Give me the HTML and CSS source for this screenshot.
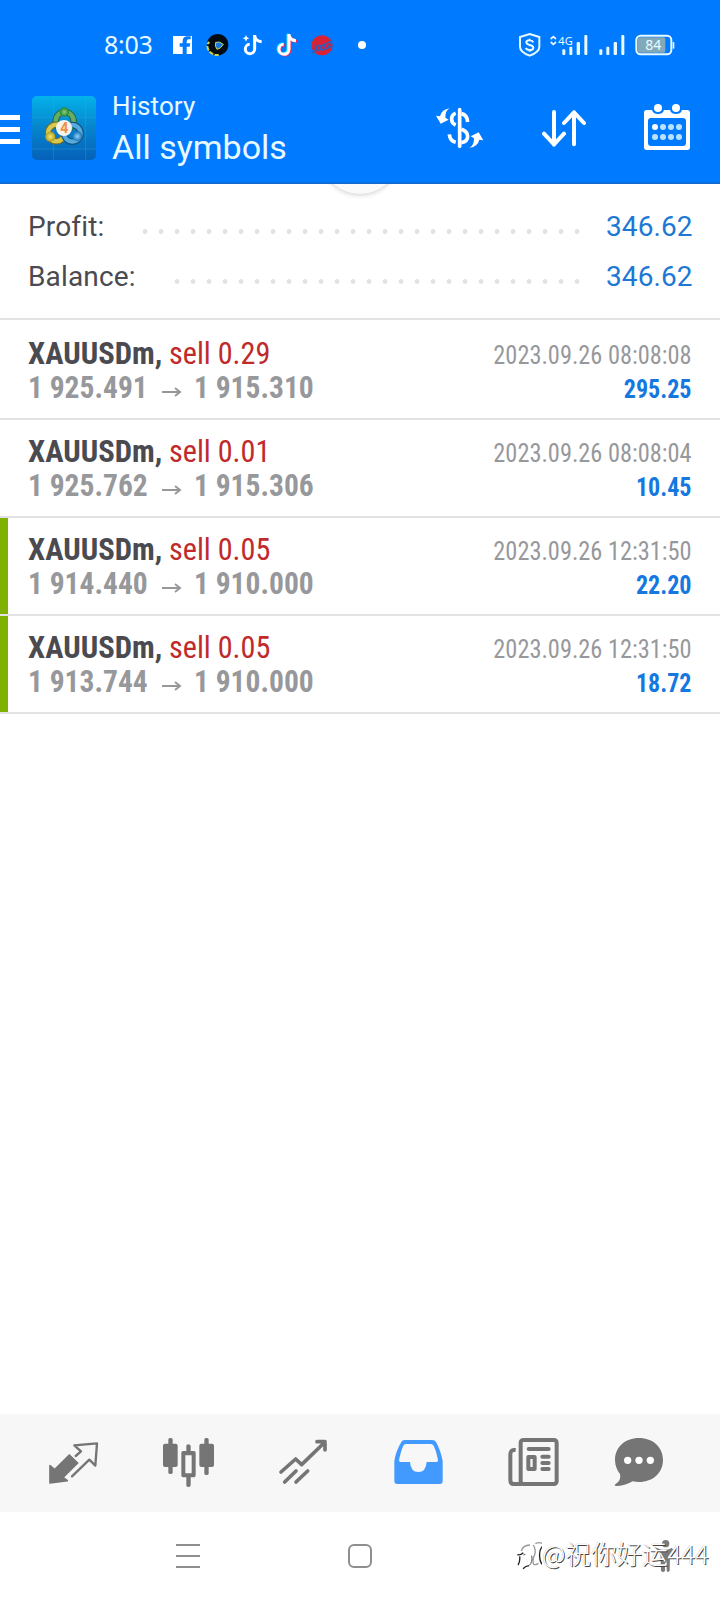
FILE: index.html
```html
<!DOCTYPE html>
<html lang="en">
<head>
<meta charset="utf-8">
<title>History</title>
<link rel="stylesheet" href="styles.css">
</head>
<body>
<div class="screen">
  <div class="status">
    <span class="clock">8:03</span>
    <svg class="apps" width="196" height="30" viewBox="510 30 588 90">
      <path fill="#fff" d="M519 48h57v54h-16V80h9l2-10h-11v-6q0-6 6-6h6v-9h-9q-15 0-15 15v6h-9v10h9v22h-29z"/>
      <circle cx="653" cy="74" r="32" fill="#030b12"/>
      <path d="M622 78q2 22 26 27h8M622 72l6-6" stroke="#d6cf48" stroke-width="6" stroke-dasharray="14 4" fill="none"/>
      <path d="M647 67q12-4 23 6-8 14-19 15-7-9-4-21z" fill="#1478e0" stroke="#c4d06c" stroke-width="3"/>
      <g fill="none" stroke-width="9">
        <path stroke="#fff" d="M764 45v42a14 14 0 1 1-15-14M764 47q3 17 21 18"/>
        <path stroke="#25e8f0" d="M864 41v45a15 15 0 1 1-16-15M864 42q3 17 21 18"/>
        <path stroke="#f32b56" d="M870 45v45a15 15 0 1 1-16-15M870 46q3 17 21 18"/>
        <path stroke="#fff" d="M867 42v46a15 15 0 1 1-16-15M867 44q3 17 21 18"/>
      </g>
      <path fill="#fff" d="M738 45l3 7 7 3-7 3-3 7-3-7-7-3 7-3z"/>
      <ellipse cx="966" cy="76" rx="32" ry="30" fill="#d82335"/>
      <path d="M934 98q16 2 12-26M958 76q-9 0-9 9t8 6q5-4 4-16l2 16M965 77l12-5-9 18 13-5M980 69l14-5-11 20 18-8" stroke="#2b5cc4" stroke-width="4" fill="none"/>
      <circle cx="1086" cy="75" r="12" fill="#fff"/>
    </svg>
    <svg class="signals" width="160" height="30" viewBox="470 30 480 90">
      <g fill="none" stroke="#e8faff" stroke-width="6">
        <path d="M508 42l29 9v29q0 16-29 27q-29-11-29-27V51z"/>
        <path stroke-width="6" d="M519 67q-3-6-11-6-10 0-10 6 0 6 10 8t11 8q0 7-11 7-9 0-12-6M508 56v5M508 90v5"/>
        <path stroke-width="5" d="M571 57l8-7 8 7M571 66l8 7 8-7"/>
        <rect x="828" y="47" width="105" height="56" rx="13"/>
      </g>
      <rect x="833" y="52" width="82" height="46" rx="5" fill="#82a9ba"/>
      <g fill="#e8faff">
        <rect x="606" y="88" width="9" height="17" rx="3"/><rect x="627" y="80" width="9" height="25" rx="3"/><rect x="649" y="66" width="10" height="39" rx="3"/><rect x="672" y="45" width="9" height="60" rx="3"/>
        <rect x="717" y="88" width="9" height="17" rx="3"/><rect x="738" y="80" width="9" height="25" rx="3"/><rect x="760" y="66" width="10" height="39" rx="3"/><rect x="783" y="45" width="9" height="60" rx="3"/>
        <rect x="937" y="66" width="5" height="20" rx="2"/>
        <text class="tiny" x="594" y="75" textLength="43" lengthAdjust="spacingAndGlyphs">4G</text>
        <text class="tiny level" x="855" y="90" textLength="48" lengthAdjust="spacingAndGlyphs">84</text>
      </g>
    </svg>
  </div>

  <div class="header">
    <svg class="menu" width="20" height="30" viewBox="0 0 20 30"><path fill="#fff" d="M0 1h20v5H0zM0 13h20v5H0zM0 25h20v5H0z"/></svg>
    <svg class="logo" width="64" height="64" viewBox="96 228 192 192">
      <defs>
        <linearGradient id="sky" x2="0" y2="1"><stop stop-color="#04b2ea"/><stop offset=".5" stop-color="#0684cc"/><stop offset="1" stop-color="#0561b8"/></linearGradient>
        <radialGradient id="gr"><stop stop-color="#8bd473"/><stop offset="1" stop-color="#1f8138"/></radialGradient>
        <radialGradient id="ye"><stop stop-color="#f7e873"/><stop offset="1" stop-color="#b29c20"/></radialGradient>
        <radialGradient id="bl"><stop stop-color="#8cd3fa"/><stop offset="1" stop-color="#1870b8"/></radialGradient>
      </defs>
      <rect x="96" y="228" width="192" height="192" rx="15" fill="url(#sky)"/>
      <path d="M160 228v192M257 228v192M96 292h192M96 387h192" stroke="#38b4ea" stroke-opacity=".3" stroke-width="3"/>
      <g fill="none" stroke-width="19">
        <circle cx="194" cy="303" r="27" stroke="#27643d"/><circle cx="194" cy="303" r="27" stroke="#63ad64" stroke-width="13"/>
        <circle cx="169" cy="339" r="25" stroke="#726c27"/><circle cx="169" cy="339" r="25" stroke="#d8c94e" stroke-width="13"/>
        <circle cx="217" cy="340" r="25" stroke="#155078"/><circle cx="217" cy="340" r="25" stroke="#55acdc" stroke-width="13"/>
      </g>
      <circle cx="193" cy="276" r="14" fill="url(#gr)"/><circle cx="151" cy="350" r="15" fill="url(#ye)"/><circle cx="232" cy="349" r="15" fill="url(#bl)"/>
      <circle cx="192" cy="324" r="24" fill="#f6f3eb"/>
      <text class="four" x="181" y="339">4</text>
    </svg>
    <div class="titles">
      <span class="title">History</span>
      <span class="subtitle">All symbols</span>
    </div>
    <div class="actions">
      <svg width="50" height="44" viewBox="226 258 150 132">
        <path fill="none" stroke="#fff" stroke-width="11" stroke-linecap="round" d="M300 269v110"/>
        <path fill="none" stroke="#fff" stroke-width="11" d="M288 280q-12 4-12 18 0 12 12 17M305 281q17 3 19 25M288 367q-17-4-19-24M305 368q19-3 19-19 0-14-19-21"/>
        <path fill="#fff" d="M270 265Q256 273 257 293L267 299 243 311 229 287 241 289Q246 268 270 265zM330 383Q344 375 343 355L333 349 357 337 371 361 359 359Q354 380 330 383z"/>
      </svg>
      <svg class="sort" width="46" height="38" viewBox="543 266 138 114"><path d="M582 275v98M552 340l30 32 30-32M642 372v-96M612 308l30-32 30 32" fill="none" stroke="#fff" stroke-width="12" stroke-linecap="round" stroke-linejoin="round"/></svg>
      <svg width="48" height="48" viewBox="849 249 144 144">
        <path fill="#fff" fill-rule="evenodd" d="M860 270h16q3 12 18 12t18-12h18q3 12 18 12t18-12h16q8 0 8 8v104q0 8-8 8H860q-8 0-8-8V278q0-8 8-8zM873 294q-9 0-9 9v66q0 9 9 9h96q9 0 9-9v-66q0-9-9-9z"/>
        <circle cx="894" cy="264" r="12" fill="#fff"/><circle cx="948" cy="264" r="12" fill="#fff"/><circle cx="885" cy="321" r="9" fill="#fff"/>
        <g fill="#b9e2ff"><circle cx="909" cy="321" r="9"/><circle cx="933" cy="321" r="9"/><circle cx="957" cy="321" r="9"/><circle cx="885" cy="351" r="9"/><circle cx="909" cy="351" r="9"/><circle cx="933" cy="351" r="9"/><circle cx="957" cy="351" r="9"/></g>
      </svg>
    </div>
  </div>

  <div class="summary">
    <span class="spinner"></span>
    <div class="line"><span class="label">Profit:</span><span class="dots long"></span><span class="amount">346.62</span></div>
    <div class="line"><span class="label">Balance:</span><span class="dots short"></span><span class="amount">346.62</span></div>
  </div>

  <div class="deals">
    <div class="deal"><div class="left"><div class="name"><b>XAUUSDm,</b> <span class="sell">sell 0.29</span></div><div class="price"><span class="from">1 925.491</span><svg class="arrow" width="22" height="12" viewBox="0 0 22 12"><path d="M1 6h18M14 2l5 4-5 4"/></svg><span class="to">1 915.310</span></div></div><div class="right"><div class="date">2023.09.26 08:08:08</div><div class="gain">295.25</div></div></div>
    <div class="deal"><div class="left"><div class="name"><b>XAUUSDm,</b> <span class="sell">sell 0.01</span></div><div class="price"><span class="from">1 925.762</span><svg class="arrow" width="22" height="12" viewBox="0 0 22 12"><path d="M1 6h18M14 2l5 4-5 4"/></svg><span class="to">1 915.306</span></div></div><div class="right"><div class="date">2023.09.26 08:08:04</div><div class="gain">10.45</div></div></div>
    <div class="deal marked"><div class="left"><div class="name"><b>XAUUSDm,</b> <span class="sell">sell 0.05</span></div><div class="price"><span class="from">1 914.440</span><svg class="arrow" width="22" height="12" viewBox="0 0 22 12"><path d="M1 6h18M14 2l5 4-5 4"/></svg><span class="to">1 910.000</span></div></div><div class="right"><div class="date">2023.09.26 12:31:50</div><div class="gain">22.20</div></div></div>
    <div class="deal marked"><div class="left"><div class="name"><b>XAUUSDm,</b> <span class="sell">sell 0.05</span></div><div class="price"><span class="from">1 913.744</span><svg class="arrow" width="22" height="12" viewBox="0 0 22 12"><path d="M1 6h18M14 2l5 4-5 4"/></svg><span class="to">1 910.000</span></div></div><div class="right"><div class="date">2023.09.26 12:31:50</div><div class="gain">18.72</div></div></div>
  </div>

  <div class="tabs">
    <svg width="720" height="98" viewBox="0 42 2160 294">
      <g fill="#757575" stroke="#757575" stroke-linejoin="round" stroke-linecap="round">
        <path stroke-width="5" d="M150 197l14 12 44-44 25 24-44 43 13 10-52 7z"/>
        <path fill="none" stroke-width="7" d="M227 168l16-14-20-18 68-6-5 67-18-18-52 50"/>
        <g stroke="none">
          <rect x="489" y="131" width="44" height="70" rx="6"/><rect x="505" y="114" width="13" height="108" rx="5"/>
          <rect x="598" y="131" width="44" height="70" rx="6"/><rect x="613" y="114" width="13" height="111" rx="5"/>
          <path fill-rule="evenodd" d="M549 153h10v-15q0-5 6-5t7 5v15h10q5 0 5 6v67q0 6-5 6h-10v24q0 5-7 5t-6-5v-24h-10q-5 0-5-6v-67q0-6 5-6zm7 13v54h19v-54z"/>
        </g>
        <path fill="none" stroke-width="11" d="M843 216l44-39 18 17 70-68M951 125h24v25M854 246l34-33M888 246l35-33"/>
      </g>
      <g transform="translate(1080 0)">
        <path fill="#429aff" fill-rule="evenodd" d="M134 120h83q8 0 11 6 14 25 20 57v60q0 9-9 9H112q-9 0-9-9v-60q5-31 21-57 3-6 10-6zm4 12q-6 0-8 5-8 17-13 44 0 5 5 5h28q2 30 25 30t25-30h29q6 0 5-6-4-25-13-43-3-5-8-5z"/>
        <g fill="none" stroke="#757575" stroke-width="12" stroke-linejoin="round">
          <rect x="482" y="120" width="108" height="132" rx="8"/>
          <path d="M467 150q-16-2-16 14v76q0 12 10 12h24"/>
          <path stroke-linecap="round" d="M506 147h60M547 170h19M547 189h19M547 207h19"/>
          <rect x="505" y="171" width="19" height="36"/>
        </g>
        <path fill="#757575" d="M837 114c42 0 72 28 72 66s-30 66-72 66q-10 0-19-2-23 14-51 14-6-3 1-7 16-10 12-29-15-19-15-42c0-38 30-66 72-66z"/>
        <g fill="#fff"><circle cx="803" cy="181" r="11"/><circle cx="837" cy="181" r="11"/><circle cx="871" cy="181" r="11"/></g>
      </g>
    </svg>
  </div>

  <div class="sysnav">
    <svg class="recent" width="24" height="24" viewBox="0 0 24 24"><path d="M0 1h24M0 12h24M0 23h24" stroke="#8e8e8e" stroke-width="2"/></svg>
    <span class="home"></span>
    <svg class="person" width="20" height="32" viewBox="882 420 60 96"><g fill="#7a7a7a"><circle cx="917" cy="431" r="11"/><path d="M882 440l14 6q20 8 39-2l6 5-11 13-1 50q-5 7-9 0v-30h-5v30q-6 8-12 0l-2-53z"/></g></svg>
    <div class="watermark">
      <svg width="27" height="32" viewBox="465 424 81 96"><g fill="none" stroke-width="3"><path stroke="#222" stroke-width="4" d="M474 502q7-10 5-26M472 471q10 2 18-6M489 513q8-8 18-9M546 447q-9 12-7 30 1 18 9 24"/><path stroke="#999" stroke-width="4" d="M484 460q4-17 26-18M526 438q12-6 23 0M520 442q9 15 4 29-8 16-3 29 8 3 14-3"/><path stroke="#555" d="M507 504q12-10 8-30M490 472l6-2"/></g></svg>
      <span>@祝你好运444</span>
    </div>
  </div>
</div>
</body>
</html>
```

FILE: styles.css
```css
* { box-sizing: border-box; }
body { margin: 0; background: #fff; font-family: Roboto, "Liberation Sans", sans-serif; }
svg { display: block; flex: none; }
.screen { width: 720px; height: 1600px; display: flex; flex-direction: column; overflow: hidden; }

.status { height: 80px; background: #007bff; display: flex; padding: 30px 46px 0 104px; align-items: flex-start; }
.clock { font: 25px/28px "Noto Sans", sans-serif; color: #e8faff; width: 66px; letter-spacing: -0.3px; }
.signals { margin-left: auto; margin-right: -3px; }
.tiny { font: 35px "Noto Sans", sans-serif; }
.level { font-size: 41px; }

.header { height: 104px; background: #007bff; border-bottom: 2px solid #0c6dd6; display: flex; align-items: flex-start; }
.menu { margin-top: 34px; }
.logo { margin: 16px 0 0 12px; }
.four { font: bold 42px Roboto, sans-serif; fill: #ef8d45; }
.titles { display: flex; flex-direction: column; padding: 6px 0 0 16px; color: #e8faff; white-space: nowrap; }
.title { font-size: 26px; line-height: 40px; letter-spacing: 0.1px; }
.subtitle { font-size: 34px; line-height: 42px; }
.actions { margin-left: auto; padding: 23px 29px 0 0; display: flex; align-items: flex-start; }
.actions svg:first-child { margin-top: 3px; }
.sort { margin: 6px 56px 0 56px; }

.summary { height: 134px; padding: 18px 28px 0 28px; position: relative; overflow: hidden; }
.spinner { position: absolute; left: 320px; top: -70px; width: 80px; height: 80px; border-radius: 50%; background: #fafafa; box-shadow: 0 1px 5px rgba(0,0,0,.2); }
.line { display: flex; height: 50px; line-height: 50px; font-size: 28px; color: #4a4a50; }
.label { letter-spacing: 0.15px; }
.dots { margin-left: auto; margin-right: 21px; height: 50px; background: radial-gradient(circle at 8px 29.5px, #e2e2e4 2px, transparent 2.8px) right top / 16px 50px repeat-x; }
.long { width: 448px; }
.short { width: 416px; }
.amount { color: #1d78d4; width: 86px; text-align: right; letter-spacing: 0.1px; }

.deals { border-top: 2px solid #e2e2e2; font-stretch: 75%; font-family: "Roboto Condensed", Roboto, sans-serif; }
.deal { height: 98px; border-bottom: 2px solid #e2e2e2; display: flex; justify-content: space-between; padding: 14px 28px 0 28px; white-space: nowrap; }
.deal:first-child { height: 100px; padding-top: 16px; }
.marked { background: linear-gradient(#80b000, #80b000) 0 0 / 8px 96px no-repeat; }
.name, .price { display: flex; font-size: 32px; line-height: 34px; color: #4a4a50; }
.name b { width: 141px; transform: scaleX(.957); transform-origin: 0 0; }
.sell { color: #c02a2a; transform: scaleX(.943); transform-origin: 0 0; }
.price { font-weight: 700; color: #97989b; }
.from { width: 133px; transform: scaleX(.922); transform-origin: 0 0; }
.to { transform: scaleX(.922); transform-origin: 0 0; }
.arrow { margin: 16px 11px 0 0; fill: none; stroke: #97989b; stroke-width: 2; }
.right { text-align: right; padding-top: 2px; font-size: 26px; line-height: 34px; }
.date { color: #97989b; transform: scaleX(.937); transform-origin: 100% 0; }
.gain { font-weight: 700; color: #1478e0; transform: scaleX(.925); transform-origin: 100% 0; }

.tabs { height: 98px; background: #f7f7f7; margin-top: auto; }
.sysnav { height: 88px; flex: none; display: flex; align-items: flex-start; padding: 32px 0 0 176px; position: relative; }
.home { width: 24px; height: 24px; border: 2px solid #8e8e8e; border-radius: 6px; margin-left: 148px; }
.person { margin: -4px 0 0 282px; }
.watermark { position: absolute; left: 515px; top: 27px; display: flex; align-items: flex-start; color: #fff; font: 300 25.6px/28px "Noto Sans CJK SC", sans-serif; white-space: nowrap; text-shadow: 1px 1px 0 #444, -0.5px -0.5px 0 #ccc; }
```
